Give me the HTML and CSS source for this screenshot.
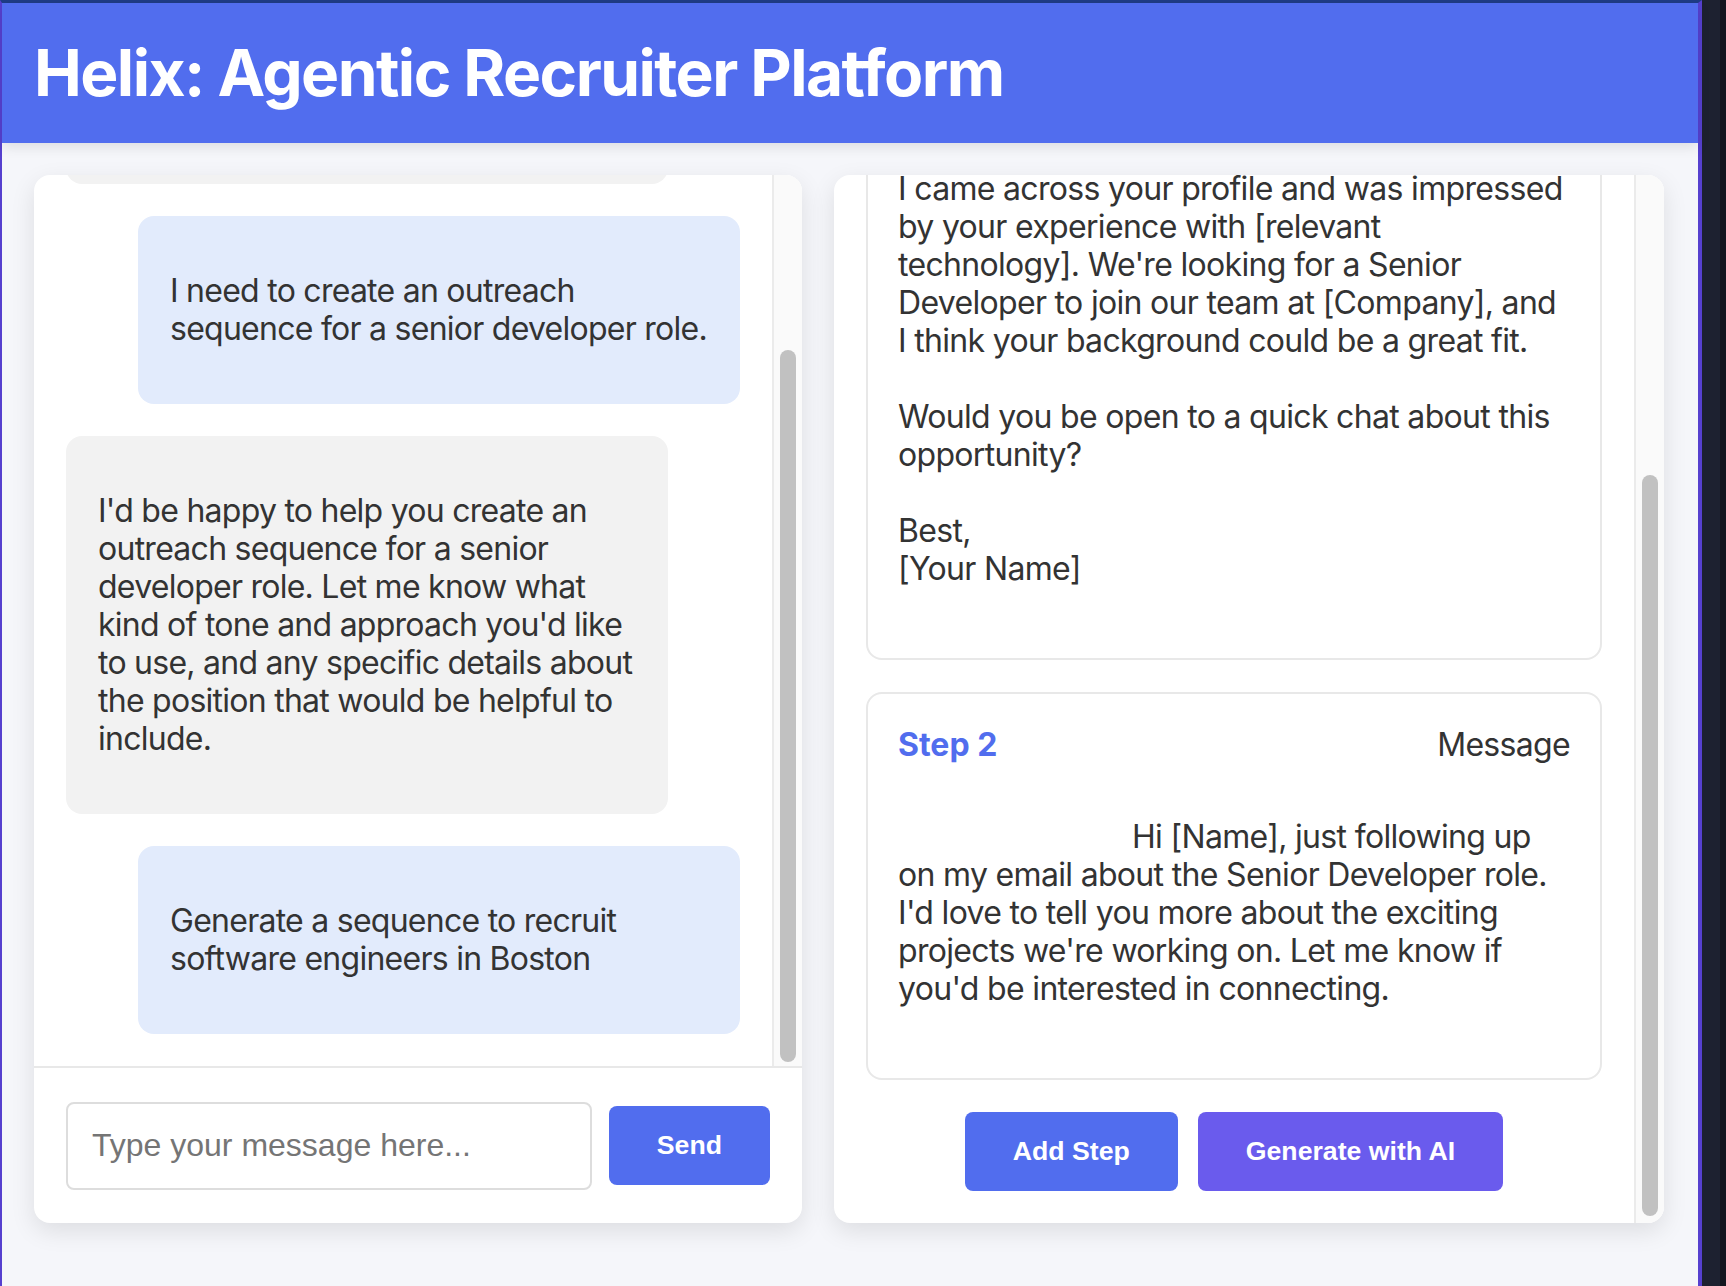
FILE: index.html
```html
<!DOCTYPE html>
<html lang="en">
<head>
<meta charset="utf-8">
<title>Helix: Agentic Recruiter Platform</title>
<link rel="stylesheet" href="styles.css">
</head>
<body>
<div class="window">
  <header class="topbar">
    <h1 class="title">Helix: Agentic Recruiter Platform</h1>
  </header>
  <main class="workspace">
    <section class="card chat">
      <div class="pane">
        <div class="messages">
          <div class="bubble assistant">Hello! I'm Helix, your AI recruiting assistant. How can I help you build your next outreach sequence today?</div>
          <div class="bubble user">I need to create an outreach sequence for a senior developer role.</div>
          <div class="bubble assistant">I'd be happy to help you create an outreach sequence for a senior developer role. Let me know what kind of tone and approach you'd like to use, and any specific details about the position that would be helpful to include.</div>
          <div class="bubble user">Generate a sequence to recruit software engineers in Boston</div>
        </div>
        <div class="scrollbar"><div class="thumb" style="margin-top:175px;height:712px"></div></div>
      </div>
      <div class="composer">
        <input class="composer-input" type="text" placeholder="Type your message here...">
        <button class="btn btn-blue" type="button">Send</button>
      </div>
    </section>
    <section class="card sequence">
      <div class="pane pane-full">
        <div class="steps">
          <div class="step">
            <div class="step-head"><span class="step-label">Step 1</span><span class="step-type">Email</span></div>
            <p class="step-text">Hi [Name],

I came across your profile and was impressed
by your experience with [relevant
technology]. We're looking for a Senior
Developer to join our team at [Company], and
I think your background could be a great fit.

Would you be open to a quick chat about this
opportunity?

Best,
[Your Name]</p>
          </div>
          <div class="step">
            <div class="step-head"><span class="step-label">Step 2</span><span class="step-type">Message</span></div>
            <p class="step-text indented">Hi [Name], just following up
on my email about the Senior Developer role.
I'd love to tell you more about the exciting
projects we're working on. Let me know if
you'd be interested in connecting.</p>
          </div>
          <div class="actions">
            <button class="btn btn-blue" type="button">Add Step</button>
            <button class="btn btn-purple" type="button">Generate with AI</button>
          </div>
        </div>
        <div class="scrollbar"><div class="thumb" style="margin-top:300px;height:741px"></div></div>
      </div>
    </section>
  </main>
</div>
</body>
</html>
```
FILE: styles.css
```css
* { box-sizing: border-box; }

html, body {
  margin: 0;
  padding: 0;
}

body {
  width: 1726px;
  height: 1286px;
  overflow: hidden;
  background: linear-gradient(to right, #1d2130 0, #1d2130 1720px, #12161f 1720px);
  font-family: Inter, "Noto Sans", "DejaVu Sans", sans-serif;
  color: #333333;
}

.window {
  width: 1702px;
  height: 1286px;
  background: #f5f6fa;
  border-top: 3px solid #1f3c86;
  border-left: 2px solid #5640cf;
  border-right: 4px solid #5640cf;
  display: flex;
  flex-direction: column;
}

.topbar {
  height: 140px;
  padding: 32px 32px;
  background: #516dee;
  box-shadow: 0 4px 12px rgba(0, 0, 0, 0.1);
  position: relative;
  z-index: 1;
}

.title {
  margin: 0;
  font-size: 64px;
  line-height: 76px;
  font-weight: 700;
  color: #ffffff;
  letter-spacing: -1.55px;
}

.workspace {
  display: flex;
  gap: 32px;
  padding: 32px 34px 0 32px;
}

.card {
  height: 1048px;
  background: #ffffff;
  border-radius: 16px;
  box-shadow: 0 8px 24px rgba(0, 0, 0, 0.1);
  overflow: hidden;
  display: flex;
  flex-direction: column;
}

.chat { width: 768px; }
.sequence { width: 830px; }

.pane {
  height: 893px;
  display: flex;
  border-bottom: 2px solid #e8e8e8;
}

.pane-full {
  height: 1048px;
  border-bottom: none;
}

.messages {
  flex: 1;
  min-width: 0;
  display: flex;
  flex-direction: column;
  justify-content: flex-end;
  gap: 32px;
  padding: 0 32px 32px 32px;
  overflow: hidden;
}

.bubble {
  width: 602px;
  padding: 56px 26px 56px 32px;
  border-radius: 16px;
  font-size: 32px;
  line-height: 38px;
  letter-spacing: -0.74px;
  flex-shrink: 0;
}

.bubble.user {
  align-self: flex-end;
  background: #e2ebfc;
}

.bubble.assistant {
  align-self: flex-start;
  background: #f2f2f2;
}

.scrollbar {
  width: 30px;
  flex-shrink: 0;
  background: #fafafa;
  border-left: 2px solid #ebebeb;
  padding: 0 6px;
}

.thumb {
  width: 16px;
  background: #c1c1c1;
  border-radius: 8px;
}

.composer {
  flex: 1;
  display: flex;
  align-items: center;
  gap: 17px;
  padding: 0 32px;
}

.composer-input {
  flex: 1;
  min-width: 0;
  height: 88px;
  padding: 0 24px;
  border: 2px solid #dddddd;
  border-radius: 8px;
  font-family: "Liberation Sans", Arial, sans-serif;
  font-size: 32px;
  color: #333333;
  background: #ffffff;
  outline: none;
}

.composer-input::placeholder { color: #757575; }

.btn {
  border: none;
  border-radius: 8px;
  padding: 24px 48px;
  font-family: "Liberation Sans", Arial, sans-serif;
  font-size: 26.67px;
  line-height: 30.67px;
  font-weight: 700;
  color: #ffffff;
  cursor: pointer;
}

.btn-blue { background: #516dee; }
.btn-purple { background: #6a5bed; }

.steps {
  flex: 1;
  min-width: 0;
  display: flex;
  flex-direction: column;
  justify-content: flex-end;
  gap: 32px;
  padding: 0 32px 32px 32px;
  overflow: hidden;
}

.step {
  flex-shrink: 0;
  border: 2px solid #e8e8e8;
  border-radius: 16px;
  padding: 32px 30px;
  font-size: 32px;
  line-height: 38px;
}

.step-head {
  display: flex;
  justify-content: space-between;
  margin-bottom: 16px;
}

.step-label {
  font-weight: 700;
  color: #516dee;
}

.step-type {
  color: #333333;
  letter-spacing: -0.68px;
}

.step-text {
  margin: 0;
  padding: 38px 0;
  white-space: pre-line;
  letter-spacing: -0.68px;
}

.step-text.indented { text-indent: 234px; }

.actions {
  flex-shrink: 0;
  display: flex;
  justify-content: center;
  gap: 20px;
}
```
